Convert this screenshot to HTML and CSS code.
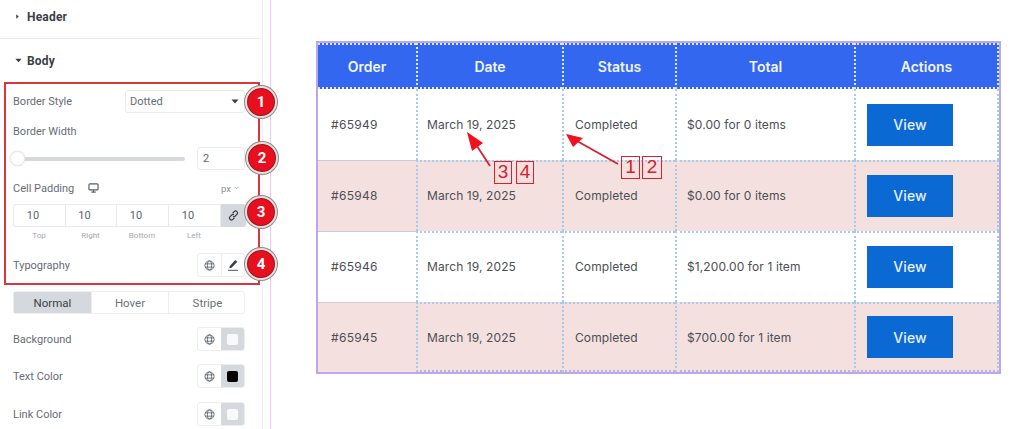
FILE: index.html
```html
<!DOCTYPE html>
<html lang="en">
<head>
<meta charset="utf-8">
<title>Table body settings</title>
<link rel="stylesheet" href="styles.css">
</head>
<body>
<div class="page">
  <aside class="panel">
    <section class="sec sec-header">
      <svg class="caret" viewBox="0 0 8 8"><path d="M2 0.5 6 4 2 7.5Z"/></svg>
      <h2>Header</h2>
    </section>
    <section class="sec sec-body">
      <svg class="caret caret-open" viewBox="0 0 8 8"><path d="M0.5 2 7.5 2 4 6Z"/></svg>
      <h2>Body</h2>
    </section>

    <div class="row row-style">
      <span class="lbl">Border Style</span>
      <div class="select"><span>Dotted</span><svg class="caret-sel" viewBox="0 0 8 5"><path d="M0.5 0.5 7.5 0.5 4 4.5Z"/></svg></div>
    </div>
    <div class="lbl row-width">Border Width</div>
    <div class="row row-slider">
      <div class="track"><span class="knob"></span></div>
      <div class="num">2</div>
    </div>
    <div class="row row-padding">
      <span class="lbl">Cell Padding</span>
      <svg class="monitor" viewBox="0 0 12 11"><rect x="1" y="1" width="10" height="6.6" rx="1" fill="none" stroke="#555d66" stroke-width="1.3"/><path d="M3.5 10H8.500" stroke="#555d66" stroke-width="1.3"/><path d="M6 8V10" stroke="#555d66" stroke-width="1.300"/></svg>
      <span class="unit">px <svg class="chev" viewBox="0 0 6 4"><path d="M0.700 0.700 3 3 5.300 0.700" fill="none" stroke="#8a9096" stroke-width="0.800"/></svg></span>
    </div>
    <div class="quad">
      <span class="q">10</span><span class="q">10</span><span class="q">10</span><span class="q">10</span>
      <span class="q-link"><svg viewBox="0 0 12 12"><path d="M5 3.500 6.700 1.800a2.100 2.100 0 0 1 3 3L8 6.500a2.100 2.100 0 0 1-2.500.300M7 8.500 5.300 10.200a2.100 2.100 0 0 1-3-3L4 5.500a2.100 2.100 0 0 1 2.500-.300" fill="none" stroke="#3a3f45" stroke-width="1.300"/></svg></span>
    </div>
    <div class="quad-lbl"><span>Top</span><span>Right</span><span>Bottom</span><span>Left</span><span></span></div>

    <div class="row row-typo">
      <span class="lbl">Typography</span>
      <div class="pair">
        <span class="p-cell"><svg class="globe" viewBox="0 0 12 12"><use href="#g"/></svg></span>
        <span class="p-cell p-edit"><svg class="pen" viewBox="0 0 12 12"><path d="M2.800 7 8.300 0.900 10.300 2.700 4.600 8.700 2.300 9.200Z" fill="#3a3f45"/><path d="M1 11.300H11" stroke="#3a3f45" stroke-width="0.900"/></svg></span>
      </div>
    </div>

    <div class="tabs">
      <span class="tab tab-on">Normal</span><span class="tab">Hover</span><span class="tab">Stripe</span>
    </div>

    <div class="row row-bg">
      <span class="lbl">Background</span>
      <div class="pair">
        <span class="p-cell"><svg class="globe" viewBox="0 0 12 12"><use href="#g"/></svg></span>
        <span class="p-cell p-swatch"><i class="sw"></i></span>
      </div>
    </div>
    <div class="row row-color">
      <span class="lbl">Text Color</span>
      <div class="pair">
        <span class="p-cell"><svg class="globe" viewBox="0 0 12 12"><use href="#g"/></svg></span>
        <span class="p-cell p-swatch"><i class="sw sw-black"></i></span>
      </div>
    </div>
    <div class="row row-color row-last">
      <span class="lbl">Link Color</span>
      <div class="pair">
        <span class="p-cell"><svg class="globe" viewBox="0 0 12 12"><use href="#g"/></svg></span>
        <span class="p-cell p-swatch"><i class="sw"></i></span>
      </div>
    </div>
  </aside>
  <div class="rule"></div>

  <main class="content">
    <table class="orders">
      <colgroup><col class="c1"><col class="c2"><col class="c3"><col class="c4"><col class="c5"></colgroup>
      <thead>
        <tr><th>Order</th><th>Date</th><th>Status</th><th>Total</th><th>Actions</th></tr>
      </thead>
      <tbody>
        <tr><td>#65949</td><td>March 19, 2025</td><td>Completed</td><td>$0.00 for 0 items</td><td><a class="view">View</a></td></tr>
        <tr><td>#65948</td><td>March 19, 2025</td><td>Completed</td><td>$0.00 for 0 items</td><td><a class="view">View</a></td></tr>
        <tr><td>#65946</td><td>March 19, 2025</td><td>Completed</td><td>$1,200.00 for 1 item</td><td><a class="view">View</a></td></tr>
        <tr><td>#65945</td><td>March 19, 2025</td><td>Completed</td><td>$700.00 for 1 item</td><td><a class="view">View</a></td></tr>
      </tbody>
    </table>
  </main>
</div>

<!-- annotations lying over the screenshot -->
<div class="redbox"></div>
<span class="badge b1">1</span>
<span class="badge b2">2</span>
<span class="badge b3">3</span>
<span class="badge b4">4</span>
<svg class="arrows" viewBox="0 0 1024 429">
  <path d="M490 166 473 140" stroke="#d8202f" stroke-width="1.800"/>
  <path d="M467 132 483 143 472 151Z" fill="#f0101f"/>
  <path d="M618 164 577 141" stroke="#d8202f" stroke-width="1.800"/>
  <path d="M566 134 583 138 573 147Z" fill="#f0101f"/>
</svg>
<span class="mark m3">3</span>
<span class="mark m4">4</span>
<span class="mark m1">1</span>
<span class="mark m2">2</span>

<svg class="defs" width="0" height="0"><defs>
  <g id="g" fill="none" stroke="#555d66" stroke-width="0.900">
    <circle cx="6" cy="6" r="5"/><ellipse cx="6" cy="6" rx="2.300" ry="5"/><path d="M1.300 4.200H10.700M1.300 7.800H10.700"/>
  </g>
</defs></svg>
</body>
</html>
```

FILE: styles.css
```css
* { box-sizing: border-box; }
html, body { margin: 0; padding: 0; }
body {
  width: 1024px;
  height: 429px;
  overflow: hidden;
  background: #fff;
  font-family: Roboto, "Liberation Sans", sans-serif;
  position: relative;
}
.page { display: flex; height: 429px; overflow: hidden; }

/* panel */
.panel {
  width: 263px;
  height: 429px;
  flex: none;
  border-right: 1px solid #eceef0;
  overflow: hidden;
  color: #5d646b;
  font-size: 11px;
}
.sec { display: flex; align-items: center; }
.sec h2 { margin: 0; font-size: 12px; font-weight: 700; color: #3a3f45; letter-spacing: 0.200px; }
.sec-header { height: 39px; border-bottom: 1px solid #e9ebed; padding: 0 0 5px 15px; width: 262px; }
.sec-body { height: 43px; padding: 0 0 0 15px; }
.caret { width: 5px; height: 7px; fill: #3a3f45; margin-right: 7px; }
.caret-open { width: 7px; margin-right: 5px; }
.row { display: flex; align-items: center; justify-content: space-between; padding: 0 17px 0 13px; }
.lbl { color: #666d74; font-size: 11px; }

.row-style { height: 23px; margin-top: 8px; }
.select {
  width: 120px; height: 23px;
  border: 1px solid #e9ebed; border-radius: 3px;
  display: flex; align-items: center; justify-content: space-between;
  padding: 0 5px 0 4px;
}
.select span { color: #666d74; }
.caret-sel { width: 8px; height: 5px; fill: #3a3f45; }

.row-width { height: 14px; line-height: 14px; margin: 12px 0 0 13px; }
.row-slider { height: 23px; margin-top: 8px; }
.track { width: 172px; height: 4px; background: #d5d8dc; border-radius: 2px; position: relative; }
.knob {
  position: absolute; left: -3px; top: -6px;
  width: 15px; height: 15px; border-radius: 50%;
  background: #fff; border: 1px solid #e6e8ea; box-shadow: 0 0 2px #d5d8dc;
}
.num {
  width: 48px; height: 23px; border: 1px solid #e9ebed; border-radius: 3px;
  padding-left: 5px; line-height: 21px; color: #5d646b;
}

.row-padding { height: 16px; margin-top: 10px; justify-content: flex-start; }
.monitor { width: 11px; height: 10px; margin-left: 14px; }
.unit { margin-left: auto; margin-right: 6px; font-size: 9.500px; color: #8a9096; display: flex; align-items: center; gap: 3px; }
.chev { width: 5px; height: 4px; }

.quad {
  display: grid; grid-template-columns: 52px 51px 52px 52px 25px;
  margin: 8px 17px 0 13px; height: 23px;
  border: 1px solid #e9ebed; border-radius: 3px; border-right: 0;
}
.q {
  border-right: 1px solid #e9ebed; color: #5d646b; font-size: 11px;
  display: flex; align-items: center; justify-content: center; padding-right: 13px;
}
.q-link { background: #d5d8dc; display: flex; align-items: center; justify-content: center; margin: -1px 0; border-radius: 0 3px 3px 0; }
.q-link svg { width: 11px; height: 11px; }
.quad-lbl {
  display: grid; grid-template-columns: 52px 51px 52px 52px 25px;
  margin: 4px 17px 0 13px; font-size: 8px; color: #a4a9ae; text-align: center; height: 10px; line-height: 10px;
}

.pair {
  width: 48px; height: 24px; display: flex;
  border: 1px solid #eceef0; border-radius: 3px; overflow: hidden;
}
.p-cell { flex: 1; display: flex; align-items: center; justify-content: center; }
.p-edit { border-left: 1px solid #eceef0; }
.p-swatch { background: #d5d8dc; }
.globe { width: 11px; height: 11px; }
.pen { width: 12px; height: 12px; }
.sw { width: 11px; height: 11px; background: #f8f9fa; border-radius: 2px; }
.sw-black { background: #000; }

.row-typo { height: 24px; margin-top: 12px; }
.tabs {
  display: grid; grid-template-columns: 77px 77px 78px;
  width: 232px; height: 23px; margin: 14px 0 0 13px;
  border-radius: 3px; border: 1px solid #eceef0;
}
.tab {
  display: flex; align-items: center; justify-content: center;
  font-size: 11.500px; color: #6c7379; border-left: 1px solid #eceef0;
}
.tab-on { background: #d5d8dc; color: #3a3f45; border-left: 0; }
.row-bg { height: 24px; margin-top: 13px; }
.row-color { height: 24px; margin-top: 13px; }
.row-last { margin-top: 14px; }

.rule { width: 1px; height: 429px; flex: none; margin-left: 7px; background: #edc9f5; }

/* table */
.content { padding: 41px 0 0 45px; flex: none; }
.orders {
  width: 685px; height: 332px; table-layout: fixed;
  border-collapse: separate; border-spacing: 0;
  border: 2px solid #b9a8ea;
  font-family: Inter, "Liberation Sans", sans-serif;
}
.c1 { width: 98px; } .c2 { width: 146px; } .c3 { width: 113px; } .c4 { width: 179px; } .c5 { width: 145px; }
.orders th {
  height: 46px; background: #3367f0; color: #f1f5ff;
  font-size: 14px; font-weight: 600; text-align: center; padding: 0;
  border-top: 2px dotted #dfe8ff; border-bottom: 2px dotted #dfe8ff; border-left: 2px dotted #dfe8ff;
}
.orders th:first-child { border-left: 0; }
.orders th:last-child { border-right: 2px dotted #dfe8ff; }
.orders td {
  height: 71px; font-size: 12px; color: #4b4f54; padding: 0 0 0 10px; letter-spacing: 0.100px;
  border-left: 2px dotted #a6c9ee; border-top: 2px dotted #a6c9ee;
}
.orders td:first-child { border-left: 0; padding-left: 13px; letter-spacing: 0.300px; }
.orders td:nth-child(2) { padding-left: 9px; }
.orders td:nth-child(3) { padding-left: 11px; }
.orders tbody tr:first-child td { border-top: 0; }
.orders tbody tr + tr td { padding-bottom: 2px; }
.orders tbody tr + tr td:first-child { border-top: 1px solid #cfc9d2; }
.orders tbody tr:nth-child(even) td { background: #f5e0e0; }
.orders tbody tr:last-child td { height: 70px; padding-bottom: 0; border-bottom: 2px dotted #b3b6ee; }
.orders tbody tr:last-child td:first-child { border-bottom: 0; }
.orders td:last-child { padding-left: 11px; border-right: 2px dotted #a6c9ee; }
.view {
  display: flex; align-items: center; justify-content: center;
  width: 86px; height: 42px; background: #0a69d3; color: #e8f1fc; font-size: 14px; font-weight: 500;
}

/* annotations */
.redbox {
  position: absolute; left: 4px; top: 82px; width: 256px; height: 203px;
  border: 2px solid #d9363f;
}
.badge {
  position: absolute; width: 32px; height: 32px; border-radius: 50%;
  background: #e8101f; color: #fff; font: 700 15px/28px Roboto, sans-serif; text-align: center;
  border: 2px solid #eadfdf; box-shadow: 0 0 0 1px #8a1a22 inset, 0 0 0 1px #8f8a8a;
}
.b1 { left: 245px; top: 86px; }
.b2 { left: 246px; top: 142px; }
.b3 { left: 245px; top: 196px; }
.b4 { left: 245px; top: 248px; }
.arrows { position: absolute; left: 0; top: 0; width: 1024px; height: 429px; pointer-events: none; }
.mark {
  position: absolute; width: 18px; height: 23px; top: 161px;
  border: 1.500px solid #d8202f; color: #d8202f; background: transparent;
  font: 400 19px/20px "Liberation Sans", sans-serif; text-align: center;
}
.m3 { left: 494px; }
.m4 { left: 516px; }
.m1 { left: 621px; top: 156px; width: 19px; }
.m2 { left: 642px; top: 156px; width: 20px; }
.defs { position: absolute; }
```
